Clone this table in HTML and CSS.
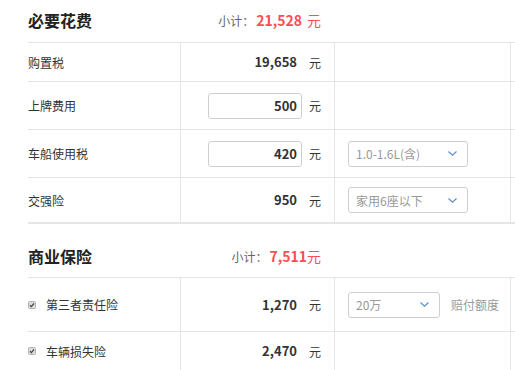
FILE: index.html
```html
<!DOCTYPE html>
<html lang="zh-CN">
<head>
<meta charset="utf-8">
<title>费用</title>
<link rel="stylesheet" href="styles.css">
</head>
<body>
<div class="page">
  <section class="sec sec-first">
    <div class="sec-head">
      <h2 class="sec-title">必要花费</h2>
      <div class="subtotal"><span class="sub-label">小计：</span><span class="sub-num">21,528</span><span class="sub-unit spaced">元</span></div>
    </div>
    <div class="table">
      <div class="row r-38">
        <div class="cell c-name">购置税</div>
        <div class="cell c-val"><span class="val">19,658</span><span class="unit">元</span></div>
        <div class="cell c-opt"></div>
        <div class="cell c-extra"></div>
      </div>
      <div class="row r-47">
        <div class="cell c-name">上牌费用</div>
        <div class="cell c-val"><span class="val boxed">500</span><span class="unit">元</span></div>
        <div class="cell c-opt"></div>
        <div class="cell c-extra"></div>
      </div>
      <div class="row r-47">
        <div class="cell c-name">车船使用税</div>
        <div class="cell c-val"><span class="val boxed">420</span><span class="unit">元</span></div>
        <div class="cell c-opt">
          <div class="select sel-wide"><span>1.0-1.6L(含)</span><svg class="chev" width="9" height="5" viewBox="0 0 9 5"><polyline points="0.5,0.5 4.5,4.2 8.5,0.5" fill="none" stroke="#5b8fd8" stroke-width="1.2"/></svg></div>
        </div>
        <div class="cell c-extra"></div>
      </div>
      <div class="row r-44 row-last">
        <div class="cell c-name">交强险</div>
        <div class="cell c-val"><span class="val">950</span><span class="unit">元</span></div>
        <div class="cell c-opt">
          <div class="select sel-wide"><span>家用6座以下</span><svg class="chev" width="9" height="5" viewBox="0 0 9 5"><polyline points="0.5,0.5 4.5,4.2 8.5,0.5" fill="none" stroke="#5b8fd8" stroke-width="1.2"/></svg></div>
        </div>
        <div class="cell c-extra"></div>
      </div>
    </div>
  </section>

  <section class="sec sec-second">
    <div class="sec-head">
      <h2 class="sec-title">商业保险</h2>
      <div class="subtotal"><span class="sub-label">小计：</span><span class="sub-num">7,511</span><span class="sub-unit">元</span></div>
    </div>
    <div class="table">
      <div class="row r-53">
        <div class="cell c-name"><span class="check"><svg width="8" height="8" viewBox="0 0 8 8"><rect x="0.5" y="0.5" width="7" height="7" rx="1" fill="#dcdcdc" stroke="#b5b5b5"/><polyline points="2,4.2 3.4,5.6 6,2.4" fill="none" stroke="#444" stroke-width="1.3"/></svg></span>第三者责任险</div>
        <div class="cell c-val"><span class="val">1,270</span><span class="unit">元</span></div>
        <div class="cell c-opt">
          <div class="select sel-narrow"><span>20万</span><svg class="chev" width="9" height="5" viewBox="0 0 9 5"><polyline points="0.5,0.5 4.5,4.2 8.5,0.5" fill="none" stroke="#5b8fd8" stroke-width="1.2"/></svg></div>
          <span class="hint">赔付额度</span>
        </div>
        <div class="cell c-extra"></div>
      </div>
      <div class="row r-38">
        <div class="cell c-name"><span class="check"><svg width="8" height="8" viewBox="0 0 8 8"><rect x="0.5" y="0.5" width="7" height="7" rx="1" fill="#dcdcdc" stroke="#b5b5b5"/><polyline points="2,4.2 3.4,5.6 6,2.4" fill="none" stroke="#444" stroke-width="1.3"/></svg></span>车辆损失险</div>
        <div class="cell c-val"><span class="val">2,470</span><span class="unit">元</span></div>
        <div class="cell c-opt"></div>
        <div class="cell c-extra"></div>
      </div>
    </div>
  </section>
</div>
</body>
</html>
```

FILE: styles.css
```css
html, body {
  margin: 0;
  padding: 0;
  background: #fff;
}
body {
  overflow: hidden;
  font-family: "Noto Sans CJK SC", "Noto Sans", sans-serif;
  color: #333;
  font-size: 12px;
}
.page {
  padding-left: 28px;
}
.sec-head {
  display: grid;
  grid-template-columns: 152px 154px;
  align-items: center;
}
.sec-first .sec-head {
  height: 40px;
  padding-bottom: 2px;
}
.sec-second .sec-head {
  height: 43px;
  padding-top: 10px;
}
.sec-title {
  margin: 0;
  font-size: 16px;
  font-weight: bold;
  color: #222;
  line-height: 20px;
}
.subtotal {
  justify-self: end;
  padding-right: 13px;
  white-space: nowrap;
  display: flex;
  align-items: baseline;
}
.sub-label {
  color: #666;
  font-size: 12px;
}
.sub-num {
  color: #ff4d55;
  font-size: 14px;
  font-weight: bold;
  margin-left: 2px;
}
.sub-unit {
  color: #ff4d55;
  font-size: 14px;
}
.sub-unit.spaced {
  margin-left: 5px;
}
.table {
  border-top: 1px solid #e4e4e4;
}
.row {
  display: grid;
  grid-template-columns: 152px 154px 176px 1fr;
  border-bottom: 1px solid #e4e4e4;
}
.row-last {
  border-bottom: 2px solid #e6e6e6;
}
.r-38 { height: 38px; }
.r-44 { height: 44px; }
.r-47 { height: 47px; }
.r-53 { height: 53px; }
.cell {
  display: flex;
  align-items: center;
  box-sizing: border-box;
  min-width: 0;
}
.c-val, .c-opt, .c-extra {
  border-left: 1px solid #e4e4e4;
}
.c-name {
  font-size: 12px;
  color: #333;
}
.c-val {
  justify-content: flex-end;
  padding-right: 13px;
}
.val {
  box-sizing: border-box;
  width: 94px;
  height: 26px;
  line-height: 24px;
  border: 1px solid transparent;
  border-radius: 3px;
  padding-right: 4px;
  text-align: right;
  font-size: 13px;
  font-weight: bold;
  color: #333;
}
.val.boxed {
  border-color: #cfcfcf;
}
.unit {
  margin-left: 7px;
  font-size: 12px;
  color: #333;
}
.c-opt {
  padding-left: 13px;
}
.select {
  box-sizing: border-box;
  height: 26px;
  border: 1px solid #cfcfcf;
  border-radius: 3px;
  display: flex;
  align-items: center;
  justify-content: space-between;
  padding: 0 10px 0 7px;
  font-size: 12px;
  color: #999;
}
.sel-wide { width: 120px; }
.sel-narrow { width: 92px; }
.chev {
  display: block;
}
.hint {
  margin-left: 11px;
  color: #999;
  font-size: 12px;
}
.check {
  display: inline-flex;
  width: 8px;
  height: 8px;
  margin-right: 10px;
}
.check svg {
  display: block;
}
```
